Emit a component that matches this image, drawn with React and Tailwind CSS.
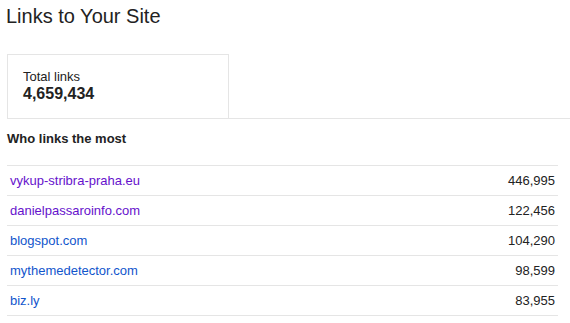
import React from 'react';

const sites = [
  { host: 'vykup-stribra-praha.eu', count: '446,995', visited: true },
  { host: 'danielpassaroinfo.com', count: '122,456', visited: true },
  { host: 'blogspot.com', count: '104,290' },
  { host: 'mythemedetector.com', count: '98,599' },
  { host: 'biz.ly', count: '83,955' },
];

function App() {
  return (
    <div
      className="min-h-screen bg-white pl-[7px] pt-[4px] text-[#222]"
      style={{ fontFamily: '"Liberation Sans", Arial, sans-serif' }}
    >
      <h1 className="-ml-px text-[20px] leading-[24px] font-normal">Links to Your Site</h1>

      <div className="mt-[26px] border-b border-[#e5e5e5]">
        <div className="w-[222px] border-x border-t border-[#e5e5e5] pl-[15px] pt-[15px] pb-[15px]">
          <div className="text-[13px] leading-[14px]">Total links</div>
          <div className="text-[16px] leading-[19px] font-bold">4,659,434</div>
        </div>
      </div>

      <h2 className="mt-[12px] text-[13px] leading-[16px] font-bold">Who links the most</h2>

      <div className="mt-[18px] w-[551px] border-b border-[#e5e5e5]">
        {sites.map((s) => (
          <div
            key={s.host}
            className="flex h-[30px] items-center justify-between border-t border-[#e5e5e5] px-[3px] text-[13px] leading-[15px]"
          >
            <a href="#" className={s.visited ? 'text-[#6611cc]' : 'text-[#1155cc]'}>
              {s.host}
            </a>
            <span>{s.count}</span>
          </div>
        ))}
      </div>
    </div>
  );
}

export default App;
